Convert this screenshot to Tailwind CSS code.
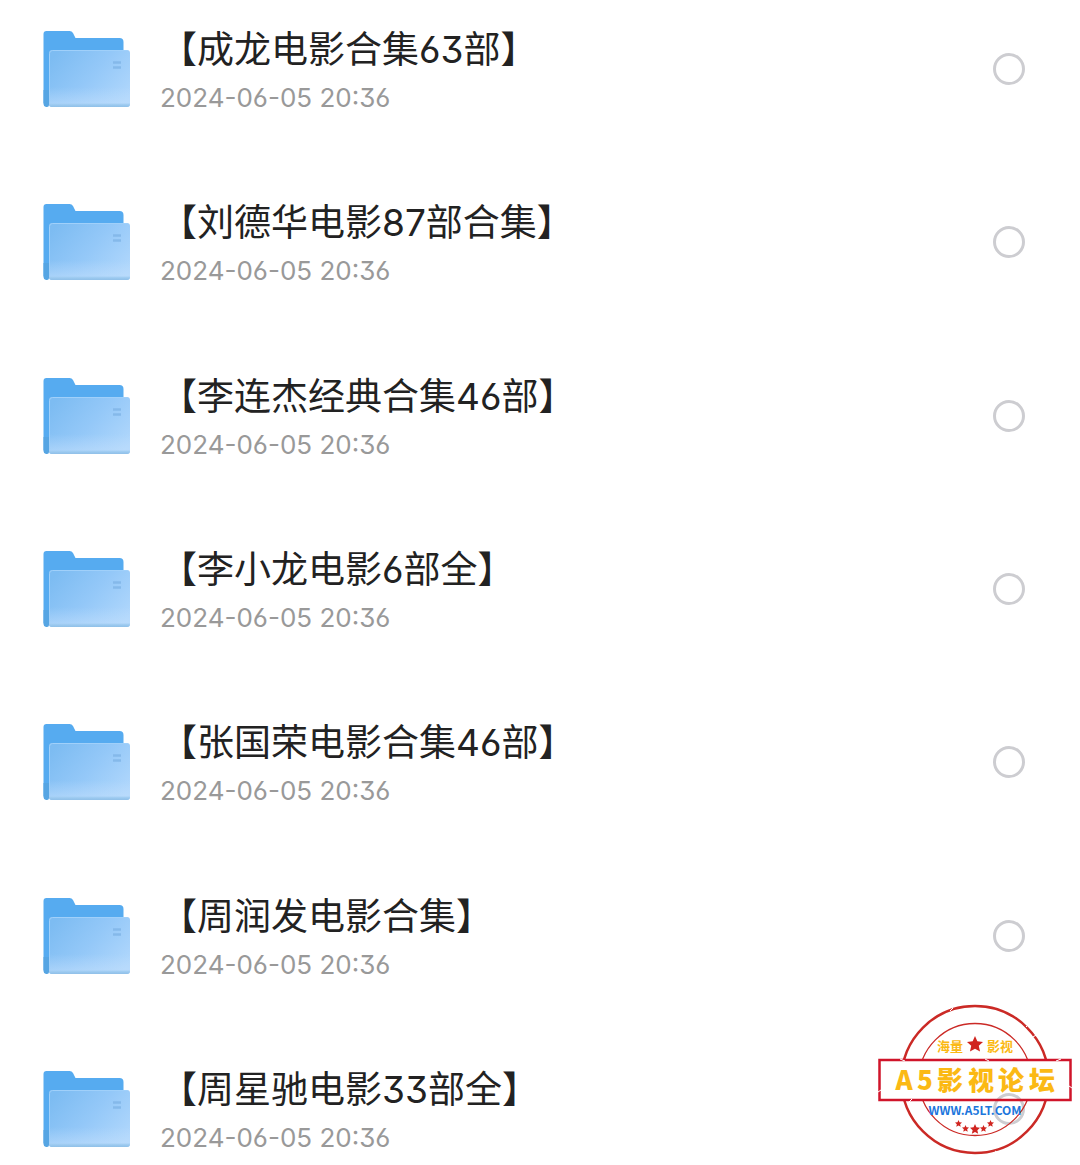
<!DOCTYPE html>
<html lang="zh-CN">

<head>
    <meta charset="UTF-8">
    <meta content="width=device-width, initial-scale=1.0" name="viewport">
    <title>电影合集</title>
    <script src="https://cdn.jsdelivr.net/npm/@tailwindcss/browser@4"></script>
</head>

<body class="bg-white font-[Inter,'Noto_Sans_CJK_SC',sans-serif] [font-feature-settings:'cv03','cv09']">

<!-- 文件夹图标，列表各行共用 -->
<svg aria-hidden="true" class="absolute w-0 h-0">
    <defs>
        <linearGradient id="folder-front" x1="0" x2="1" y1="0.2" y2="0.8">
            <stop offset="0" stop-color="#7dbcf2"/>
            <stop offset="0.5" stop-color="#94c8f8"/>
            <stop offset="1" stop-color="#b0d7fc"/>
        </linearGradient>
        <linearGradient id="folder-shine" x1="0" x2="0" y1="0" y2="1">
            <stop offset="0.65" stop-color="#c0defc" stop-opacity="0"/>
            <stop offset="0.92" stop-color="#c0defc" stop-opacity="0.5"/>
            <stop offset="0.96" stop-color="#9ccaf0"/>
            <stop offset="1" stop-color="#90c0e8"/>
        </linearGradient>
        <symbol id="folder" viewBox="0 0 88 78">
            <path d="M0.500 4a3 3 0 0 1 3-3h23a4 4 0 0 1 3.500 2l2.500 5h44a4 4 0 0 1 4 4v52H6v9a3 3 0 0 1-5.500 0z" fill="#56abf0"/>
            <path d="M0.500 60H6v15a2 2 0 0 1-2 2H3a3 3 0 0 1-2.500-3z" fill="#56a5e3"/>
            <rect fill="url(#folder-front)" height="57" rx="3" width="81" x="6" y="20"/>
            <rect fill="url(#folder-shine)" height="57" rx="3" width="81" x="6" y="20"/>
            <path d="M6.500 72V23.500a3 3 0 0 1 3-3H84" fill="none" stroke="#a0d0fa"/>
            <path d="M70 32.500h8M70 37.500h8" stroke="#85b9ea" stroke-width="2.500"/>
        </symbol>
        <symbol id="star" viewBox="0 0 20 20">
            <path d="M10 0l2.900 6.700 7.100.700-5.300 4.900 1.600 7.200L10 15.800l-6.300 3.700 1.600-7.200L0 7.400l7.100-.700z" fill="#d0241f"/>
        </symbol>
    </defs>
</svg>

<main class="relative min-h-screen">
    <ul class="min-h-screen flex flex-col justify-between gap-16 pl-[43px] pr-[55px] pt-[29px] pb-4">
        <li>
            <label class="flex items-center h-20" for="f1">
                <svg aria-hidden="true" class="shrink-0 w-[88px] h-[78px]"><use href="#folder"/></svg>
                <span class="grow ml-[29px]">
                    <span class="block text-[37px] leading-[52px] text-[#222]">【成龙电影合集63部】</span>
                    <time class="block mt-1.5 text-[26px] leading-8 text-[#999]">2024-06-05 20:36</time>
                </span>
                <input class="appearance-none shrink-0 size-8 rounded-full border-3 border-[#cdcdd1] checked:bg-blue-500" id="f1" type="checkbox">
            </label>
        </li>
        <li>
            <label class="flex items-center h-20" for="f2">
                <svg aria-hidden="true" class="shrink-0 w-[88px] h-[78px]"><use href="#folder"/></svg>
                <span class="grow ml-[29px]">
                    <span class="block text-[37px] leading-[52px] text-[#222]">【刘德华电影87部合集】</span>
                    <time class="block mt-1.5 text-[26px] leading-8 text-[#999]">2024-06-05 20:36</time>
                </span>
                <input class="appearance-none shrink-0 size-8 rounded-full border-3 border-[#cdcdd1] checked:bg-blue-500" id="f2" type="checkbox">
            </label>
        </li>
        <li>
            <label class="flex items-center h-20" for="f3">
                <svg aria-hidden="true" class="shrink-0 w-[88px] h-[78px]"><use href="#folder"/></svg>
                <span class="grow ml-[29px]">
                    <span class="block text-[37px] leading-[52px] text-[#222]">【李连杰经典合集46部】</span>
                    <time class="block mt-1.5 text-[26px] leading-8 text-[#999]">2024-06-05 20:36</time>
                </span>
                <input class="appearance-none shrink-0 size-8 rounded-full border-3 border-[#cdcdd1] checked:bg-blue-500" id="f3" type="checkbox">
            </label>
        </li>
        <li>
            <label class="flex items-center h-20" for="f4">
                <svg aria-hidden="true" class="shrink-0 w-[88px] h-[78px]"><use href="#folder"/></svg>
                <span class="grow ml-[29px]">
                    <span class="block text-[37px] leading-[52px] text-[#222]">【李小龙电影6部全】</span>
                    <time class="block mt-1.5 text-[26px] leading-8 text-[#999]">2024-06-05 20:36</time>
                </span>
                <input class="appearance-none shrink-0 size-8 rounded-full border-3 border-[#cdcdd1] checked:bg-blue-500" id="f4" type="checkbox">
            </label>
        </li>
        <li>
            <label class="flex items-center h-20" for="f5">
                <svg aria-hidden="true" class="shrink-0 w-[88px] h-[78px]"><use href="#folder"/></svg>
                <span class="grow ml-[29px]">
                    <span class="block text-[37px] leading-[52px] text-[#222]">【张国荣电影合集46部】</span>
                    <time class="block mt-1.5 text-[26px] leading-8 text-[#999]">2024-06-05 20:36</time>
                </span>
                <input class="appearance-none shrink-0 size-8 rounded-full border-3 border-[#cdcdd1] checked:bg-blue-500" id="f5" type="checkbox">
            </label>
        </li>
        <li>
            <label class="flex items-center h-20" for="f6">
                <svg aria-hidden="true" class="shrink-0 w-[88px] h-[78px]"><use href="#folder"/></svg>
                <span class="grow ml-[29px]">
                    <span class="block text-[37px] leading-[52px] text-[#222]">【周润发电影合集】</span>
                    <time class="block mt-1.5 text-[26px] leading-8 text-[#999]">2024-06-05 20:36</time>
                </span>
                <input class="appearance-none shrink-0 size-8 rounded-full border-3 border-[#cdcdd1] checked:bg-blue-500" id="f6" type="checkbox">
            </label>
        </li>
        <li>
            <label class="flex items-center h-20" for="f7">
                <svg aria-hidden="true" class="shrink-0 w-[88px] h-[78px]"><use href="#folder"/></svg>
                <span class="grow ml-[29px]">
                    <span class="block text-[37px] leading-[52px] text-[#222]">【周星驰电影33部全】</span>
                    <time class="block mt-1.5 text-[26px] leading-8 text-[#999]">2024-06-05 20:36</time>
                </span>
                <input class="appearance-none shrink-0 size-8 rounded-full border-3 border-[#cdcdd1] checked:bg-blue-500" id="f7" type="checkbox">
            </label>
        </li>
    </ul>

    <!-- 印章水印 -->
    <svg class="absolute right-2 bottom-[9px] w-[194px] h-[152px] pointer-events-none" viewBox="0 0 194 152">
        <clipPath id="outside-banner">
            <path d="M0 0h194v55H0zM0 97h194v55H0z"/>
        </clipPath>
        <g clip-path="url(#outside-banner)" fill="none" stroke="#cb2a26">
            <circle cx="97" cy="75.500" r="73.500" stroke-width="2.500"/>
            <circle cx="97" cy="75.500" r="56" stroke-width="1.300"/>
        </g>
        <rect fill="none" height="40" stroke="#d0142a" stroke-width="2.500" width="191" x="1.500" y="56"/>
        <!-- 磨损痕迹 -->
        <path d="M34 47l3 2M72 7l3-3M148 23l2-2M22 55l5 2M107 55l4 2M178 57l5-2M191 82l3 2M0 88l3-2M31 98l3-3M70 148l2 3M117 147l5 3M155 33l3-2" stroke="#fff" stroke-width="1"/>
        <g class="font-['Noto_Sans_CJK_SC',sans-serif] font-bold" fill="#fbb914" text-anchor="middle">
            <text font-size="13" x="72" y="47">海量</text>
            <text font-size="13" x="122" y="47">影视</text>
            <text class="font-black" font-size="26" x="26 47 72 103 133 164" y="86">A5影视论坛</text>
        </g>
        <text class="font-['Noto_Sans_CJK_SC',sans-serif] font-bold" fill="#1c76dc" font-size="12" text-anchor="middle" x="97" y="111">WWW.A5LT.COM</text>
        <use height="16" href="#star" width="16" x="89" y="32"/>
        <use height="10" href="#star" width="10" x="92" y="120"/>
        <use height="7" href="#star" width="7" x="84" y="121"/>
        <use height="7" href="#star" width="7" x="102" y="121"/>
        <use height="7" href="#star" width="7" x="77" y="116"/>
        <use height="7" href="#star" width="7" x="109" y="116"/>
    </svg>
</main>

</body>

</html>
